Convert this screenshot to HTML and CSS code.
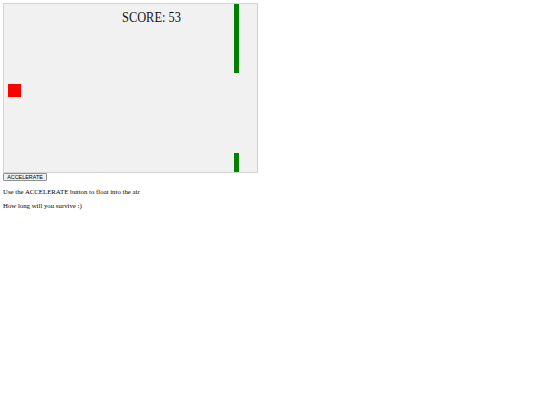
FILE: index.html
```html
<!DOCTYPE html>
<html>
<head>
<meta charset="utf-8">
<link rel="stylesheet" href="styles.css">
</head>
<body>
<div class="game">
  <div class="score">SCORE: 53</div>
  <div class="piece"></div>
  <div class="pipe pipe-top"></div>
  <div class="pipe pipe-bottom"></div>
</div>
<button class="btn">ACCELERATE</button>
<p class="note">Use the ACCELERATE button to float into the air</p>
<p class="note">How long will you survive :)</p>
</body>
</html>
```
FILE: styles.css
```css
html, body {
  margin: 0;
  padding: 0;
  background: #ffffff;
}
body {
  padding: 3px;
  font-family: "Liberation Serif", "Times New Roman", serif;
}
.game {
  position: relative;
  width: 253px;
  height: 168px;
  border: 1px solid #d3d3d3;
  background: #f1f1f1;
  overflow: hidden;
}
.score {
  position: absolute;
  left: 118px;
  top: 5px;
  font-size: 15.5px;
  line-height: 16px;
  color: #111;
  white-space: nowrap;
  transform: scaleX(0.8);
  transform-origin: left top;
}
.piece {
  position: absolute;
  left: 4px;
  top: 80px;
  width: 13px;
  height: 13px;
  background: #ff0000;
}
.pipe {
  position: absolute;
  left: 230px;
  width: 5px;
  background: #008000;
}
.pipe-top {
  top: 0;
  height: 69px;
}
.pipe-bottom {
  top: 149px;
  height: 19px;
}
.btn {
  display: block;
  margin: 0;
  padding: 0 3px;
  height: 8px;
  width: 44px;
  font-family: "Liberation Sans", Arial, sans-serif;
  font-size: 5.4px;
  line-height: 6px;
  color: #000;
  background: #efefef;
  border: 1px solid #8f8f8f;
  border-radius: 1px;
  white-space: nowrap;
}
.note {
  margin: 7px 0 6px;
  font-size: 6.8px;
  line-height: 8px;
  color: #000;
}
.note + .note {
  margin-top: 6px;
}
```
